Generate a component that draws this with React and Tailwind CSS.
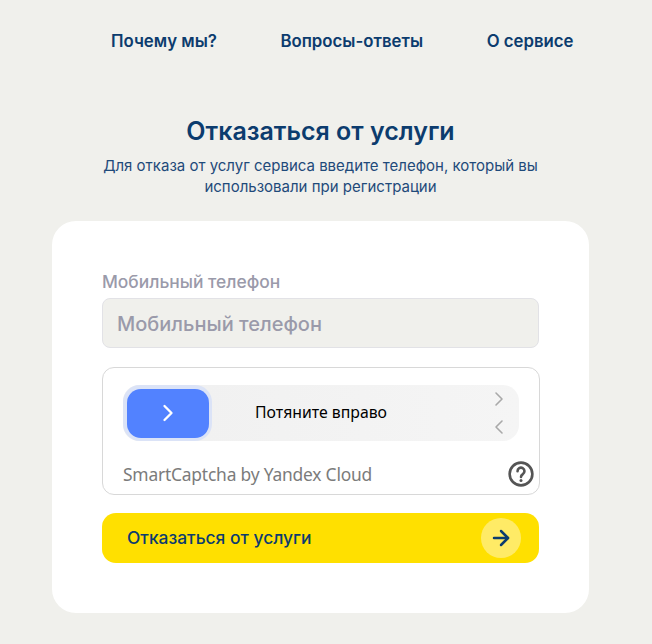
import { ArrowRight, ChevronLeft, ChevronRight } from 'lucide-react'

const navItems = ['Почему мы?', 'Вопросы-ответы', 'О сервисе']

export default function App() {
  return (
    <div className="min-h-[644px] w-[652px] overflow-hidden bg-[#f0f0ec] font-['Inter',sans-serif] text-[#0c3c6e]">
      {/* Nav */}
      <nav className="flex h-[82px] items-center gap-[63.5px] pl-[111px]">
        {navItems.map(item => (
          <a key={item} className="text-[16.8px] font-semibold leading-5">{item}</a>
        ))}
      </nav>

      {/* Heading */}
      <div className="mt-[34px] w-[641px] text-center">
        <h1 className="text-[25px] font-semibold leading-[30px]">Отказаться от услуги</h1>
        <p className="mx-auto mt-[9px] w-[480px] text-[15px] leading-[21px] text-[#1f4a7a]">
          Для отказа от услуг сервиса введите телефон, который вы использовали при регистрации
        </p>
      </div>

      {/* Form card */}
      <div className="ml-[52px] mt-[24px] h-[392px] w-[537px] rounded-[24px] bg-white px-[50px] pt-[51px]">
        <label className="block text-[17.4px] font-medium leading-5 text-[#9a9aaa]">Мобильный телефон</label>
        <div className="mt-[6px] flex h-[50px] items-center rounded-lg border border-[#e2e2e6] bg-[#f0f0ec] px-[14px] pt-[1px] text-[20px] font-medium text-[#9a9aaa]">
          Мобильный телефон
        </div>

        {/* Captcha */}
        <div className="-mr-[1px] mt-[19px] h-[128px] rounded-xl border border-[#d8d8d8] px-5 pt-[17px]">
          <div className="relative flex h-[56px] items-center justify-center rounded-2xl bg-gradient-to-r from-[#f0f0f0] to-[#f5f5f5] pb-[2px]">
            <div className="absolute left-0 top-0 flex h-[56px] w-[89px] items-center justify-center rounded-[17px] bg-[#dbe3f7]">
              <div className="flex h-[49px] w-[82px] items-center justify-center rounded-[14px] bg-[#5282ff]">
                <ChevronRight className="h-[28px] w-[28px] text-white" strokeWidth={2} />
              </div>
            </div>
            <span className="text-[15.8px] leading-5 text-black font-['Noto_Sans',sans-serif]">Потяните вправо</span>
            <div className="absolute right-[8px] top-0 flex h-full flex-col items-center justify-between py-[2px] text-[#a9a9a9]">
              <ChevronRight className="h-[24px] w-[24px]" strokeWidth={1.6} />
              <ChevronLeft className="h-[24px] w-[24px]" strokeWidth={1.6} />
            </div>
          </div>
          <div className="mt-[20px] flex h-[26px] items-center justify-between">
            <span className="text-[17.4px] tracking-[-0.2px] text-[#7b7b7b] font-['Noto_Sans',sans-serif]">SmartCaptcha by Yandex Cloud</span>
            <svg viewBox="0 0 24 24" className="-mr-[15px] h-[26px] w-[26px]" fill="none" stroke="#555" strokeWidth="2.4">
              <circle cx="12" cy="12" r="10.5" />
              <path d="M8.8 9.4a3.2 3.2 0 1 1 4.9 2.7c-1 .7-1.7 1.2-1.7 2.6" strokeLinecap="round" />
              <circle cx="12" cy="18" r="1.4" fill="#555" stroke="none" />
            </svg>
          </div>
        </div>

        {/* Submit */}
        <button className="mt-[18px] flex h-[50px] w-full items-center justify-between rounded-[14px] bg-[#ffe000] pl-[25px] pr-[18px]">
          <span className="pt-[1px] text-[17.4px] font-medium">Отказаться от услуги</span>
          <span className="flex h-10 w-10 items-center justify-center rounded-full bg-[#ffeb66]">
            <ArrowRight className="h-[24px] w-[24px]" strokeWidth={2.5} />
          </span>
        </button>
      </div>
    </div>
  )
}
